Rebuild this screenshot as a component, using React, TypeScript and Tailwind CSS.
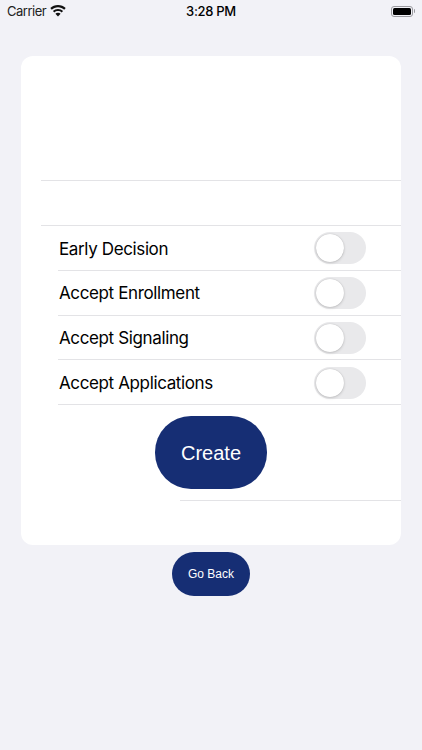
const rows = [
  "Early Decision",
  "Accept Enrollment",
  "Accept Signaling",
  "Accept Applications",
];

function Toggle() {
  return (
    <div className="mt-[0.8px] h-[32px] w-[52px] rounded-full bg-[#e9e9eb] p-[2px]">
      <div className="h-[28px] w-[28px] rounded-full bg-white shadow-[0_1px_3px_rgba(0,0,0,0.16),0_0_1px_rgba(0,0,0,0.22)]" />
    </div>
  );
}

function Wifi() {
  return (
    <svg width="16" height="12" viewBox="0 0 16 12" fill="#111" className="mb-[1px]">
      <path d="M8 0C5 0 2.300 1.200 .3 3.100l1.500 1.600C3.400 3.200 5.600 2.200 8 2.200s4.600 1 6.200 2.500l1.500-1.600C13.700 1.200 11 0 8 0z" />
      <path d="M8 3.900c-2 0-3.800.8-5.100 2l1.500 1.600C5.300 6.600 6.600 6.100 8 6.100s2.700.5 3.600 1.400l1.500-1.600c-1.300-1.200-3.100-2-5.100-2z" />
      <path d="M8 7.800c-1 0-1.900.4-2.600 1L8 11.600l2.600-2.800c-.7-.6-1.600-1-2.600-1z" />
    </svg>
  );
}

function Battery() {
  return (
    <div className="flex items-center gap-[1px]">
      <div className="h-[11px] w-[22px] rounded-[3px] border border-[#9a9a9f] p-[1px]">
        <div className="h-full w-full rounded-[1.5px] bg-black" />
      </div>
      <div className="h-[4px] w-[1px] rounded-r-full bg-[#9a9a9f]" />
    </div>
  );
}

export default function App() {
  return (
    <div className="flex h-[750px] w-[422px] flex-col overflow-hidden bg-[#f2f2f7] font-['Inter',sans-serif] text-black">
      {/* status bar */}
      <div className="grid h-[22px] grid-cols-3 items-center pl-[7px] pr-[7px] text-[13px]">
        <div className="flex items-center gap-[3.5px] tracking-[-0.5px] text-[#222]">
          <span className="pt-[1px]">Carrier</span>
          <Wifi />
        </div>
        <div className="pt-[1px] text-center font-medium tracking-[-0.3px]">3:28 PM</div>
        <div className="flex justify-end">
          <Battery />
        </div>
      </div>

      {/* card */}
      <div className="mx-[21px] mt-[34px] h-[489px] rounded-[12px] bg-white">
        <div className="ml-[20px] h-[125px] border-b border-[#e3e3e6]" />
        <div className="ml-[20px] h-[45px] border-b border-[#e3e3e6]" />
        {rows.map((label) => (
          <div
            key={label}
            className="ml-[37px] flex h-[44.75px] items-center justify-between border-b border-[#e3e3e6] pr-[35px]"
          >
            <span className="pl-[1px] pt-[2.8px] text-[17px] tracking-[-0.37px]">{label}</span>
            <Toggle />
          </div>
        ))}
        <div className="ml-[159px] h-[96px] border-b border-[#e3e3e6]">
          <div className="-ml-[25px] pt-[11px]">
            <button className="h-[73px] w-[112px] rounded-[36px] bg-[#162e74] font-['Liberation_Sans',sans-serif] text-[20px] text-white">
              Create
            </button>
          </div>
        </div>
      </div>

      {/* back */}
      <div className="mt-[7px] flex justify-center">
        <button className="h-[44px] w-[78px] rounded-[22px] bg-[#162e74] font-['Liberation_Sans',sans-serif] text-[12px] text-white">
          Go Back
        </button>
      </div>
    </div>
  );
}
